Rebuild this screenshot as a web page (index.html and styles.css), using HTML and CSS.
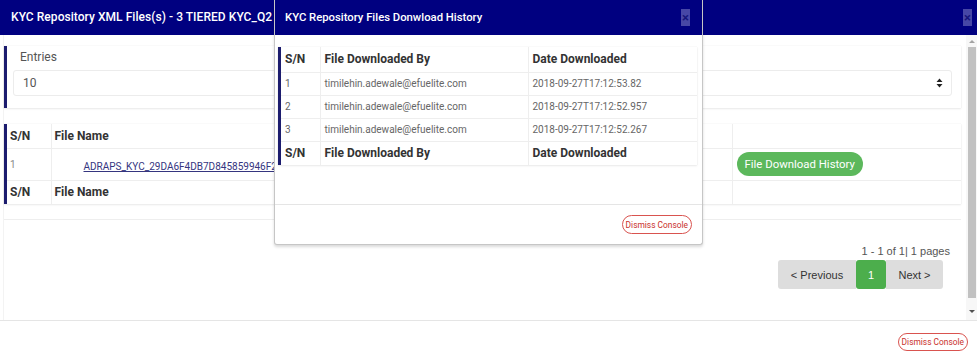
FILE: index.html
```html
<!DOCTYPE html>
<html lang="en">
<head>
    <meta charset="UTF-8">
    <meta name="viewport" content="width=device-width, initial-scale=1.0">
    <title>KYC Repository</title>
    <link rel="stylesheet" href="styles.css">
</head>
<body>
    <!-- back modal: repository files -->
    <div class="modal">
        <div class="modal-header">
            <h4 class="modal-title">KYC Repository XML Files(s) - 3 TIERED KYC_Q2</h4>
            <span class="close-btn">&times;</span>
        </div>

        <div class="modal-body">
            <div class="body-content">
                <!-- entries select -->
                <div class="card entries-card">
                    <label class="entries-label">Entries</label>
                    <div class="select-box">
                        <span>10</span>
                        <svg class="select-arrow" width="7" height="10" viewBox="0 0 7 10">
                            <path d="M0.5 4 L3.5 0.5 L6.5 4 Z M0.5 6 L3.5 9.5 L6.5 6 Z" fill="#222"/>
                        </svg>
                    </div>
                </div>

                <!-- files table -->
                <div class="card table-card">
                    <table class="files-table">
                        <thead>
                            <tr>
                                <th class="col-sn">S/N</th>
                                <th class="col-name">File Name</th>
                                <th class="col-action"></th>
                            </tr>
                        </thead>
                        <tbody>
                            <tr>
                                <td class="cell-sn">1</td>
                                <td class="cell-name"><a href="#" class="file-link">ADRAPS_KYC_29DA6F4DB7D845859946F2C7</a></td>
                                <td class="cell-action"><button class="history-btn">File Download History</button></td>
                            </tr>
                        </tbody>
                        <tfoot>
                            <tr>
                                <th>S/N</th>
                                <th>File Name</th>
                                <th></th>
                            </tr>
                        </tfoot>
                    </table>
                </div>

                <!-- paging -->
                <div class="pager">
                    <div class="pager-info">1 - 1 of 1| 1 pages</div>
                    <div class="pager-buttons">
                        <button class="page-btn">&lt; Previous</button>
                        <button class="page-btn page-current">1</button>
                        <button class="page-btn">Next &gt;</button>
                    </div>
                </div>
            </div>

            <!-- scrollbar -->
            <div class="scrollbar">
                <span class="scroll-arrow up"></span>
                <div class="scroll-thumb"></div>
                <span class="scroll-arrow down"></span>
            </div>
        </div>

        <div class="modal-footer">
            <button class="dismiss-btn">Dismiss Console</button>
        </div>
    </div>

    <!-- front modal: download history -->
    <div class="history-modal">
        <div class="modal-header history-header">
            <h4 class="modal-title history-title">KYC Repository Files Donwload History</h4>
            <span class="close-btn">&times;</span>
        </div>

        <div class="history-body">
            <div class="card history-card">
                <table class="history-table">
                    <thead>
                        <tr>
                            <th class="h-sn">S/N</th>
                            <th class="h-by">File Downloaded By</th>
                            <th class="h-date">Date Downloaded</th>
                        </tr>
                    </thead>
                    <tbody>
                        <tr>
                            <td>1</td>
                            <td>timilehin.adewale@efuelite.com</td>
                            <td>2018-09-27T17:12:53.82</td>
                        </tr>
                        <tr>
                            <td>2</td>
                            <td>timilehin.adewale@efuelite.com</td>
                            <td>2018-09-27T17:12:52.957</td>
                        </tr>
                        <tr>
                            <td>3</td>
                            <td>timilehin.adewale@efuelite.com</td>
                            <td>2018-09-27T17:12:52.267</td>
                        </tr>
                    </tbody>
                    <tfoot>
                        <tr>
                            <th>S/N</th>
                            <th>File Downloaded By</th>
                            <th>Date Downloaded</th>
                        </tr>
                    </tfoot>
                </table>
            </div>
        </div>

        <div class="history-footer">
            <button class="dismiss-btn">Dismiss Console</button>
        </div>
    </div>
</body>
</html>
```

FILE: styles.css
```css
/* reset */
* {
    margin: 0;
    padding: 0;
    box-sizing: border-box;
}

body {
    font-family: Roboto, "Liberation Sans", sans-serif;
    background-color: white;
    width: 977px;
    height: 351px;
    overflow: hidden;
    position: relative;
}

/* back modal */
.modal {
    display: flex;
    flex-direction: column;
    width: 977px;
    height: 351px;
}

.modal-header {
    display: flex;
    align-items: center;
    justify-content: space-between;
    height: 35px;
    background-color: #000080;
    padding: 0 5px 1px 11px;
    flex-shrink: 0;
}

.modal-title {
    color: white;
    font-size: 12px;
    font-weight: 500;
    letter-spacing: 0.05px;
}

.history-title {
    font-size: 11.3px;
    letter-spacing: 0;
}

.close-btn {
    display: flex;
    align-items: center;
    justify-content: center;
    width: 9px;
    height: 17px;
    background-color: #4747a6;
    color: #15157a;
    font-size: 13px;
    font-weight: 700;
    line-height: 1;
}

.modal-body {
    display: flex;
    height: 285px;
    flex-shrink: 0;
}

.body-content {
    flex: 1;
    margin-left: 3px;
    padding-right: 5px;
    border-left: 1px solid #f3f3f3;
}

/* cards with a dark left edge */
.card {
    background-color: white;
    border-left: 3px solid #1c1c6e;
    box-shadow: 0 1px 2px rgba(0,0,0,0.08), 0 0 1px rgba(0,0,0,0.1);
}

.entries-card {
    margin-top: 11px;
    height: 62px;
    padding: 3px 9px 0 6px;
}

.entries-label {
    display: block;
    padding-left: 7px;
    font-size: 12px;
    line-height: 16px;
    color: #555;
    margin-bottom: 5px;
}

.select-box {
    display: flex;
    align-items: center;
    justify-content: space-between;
    height: 26px;
    border: 1px solid #ececec;
    border-radius: 3px;
    padding: 0 8px 0 9px;
    font-size: 12px;
    color: #555;
}

.table-card {
    margin-top: 16px;
}

/* files table */
.files-table {
    width: 100%;
    border-collapse: collapse;
}

.files-table th,
.files-table td {
    border: 1px solid #eeeeee;
    text-align: left;
}

.files-table tr > :first-child {
    border-left: none;
}

.files-table tr > :last-child {
    border-right: none;
}

.files-table thead tr > * {
    border-top: none;
}

.files-table tfoot tr > * {
    border-bottom: none;
}

.files-table th {
    height: 24px;
    font-size: 12px;
    font-weight: 700;
    color: #333;
    padding: 0 3px;
}

.col-sn {
    width: 44px;
}

.col-action {
    width: 229px;
}

.files-table td {
    height: 32px;
}

.cell-sn {
    font-size: 10px;
    color: #888;
    padding-left: 3px;
}

.cell-name {
    padding-left: 32px;
    white-space: nowrap;
}

.file-link {
    font-size: 10px;
    color: #35357f;
    text-decoration: underline;
}

.cell-action {
    padding-left: 4px;
}

.history-btn {
    background-color: #5cb85c;
    color: white;
    border: none;
    border-radius: 12px;
    height: 24px;
    padding: 0 8px;
    font-family: Roboto, sans-serif;
    font-size: 11.4px;
    white-space: nowrap;
}

/* paging */
.pager {
    margin-top: 15px;
    border-top: 1px solid #eeeeee;
    padding-top: 23px;
    display: flex;
    flex-direction: column;
    align-items: flex-end;
    font-family: "Liberation Sans", Arial, sans-serif;
}

.pager-info {
    font-size: 11px;
    line-height: 16px;
    color: #555;
    margin-right: 11px;
    margin-bottom: 1px;
}

.pager-buttons {
    display: flex;
    margin-right: 18px;
}

.page-btn {
    height: 29px;
    border: none;
    background-color: #dddddd;
    color: #333;
    font-family: "Liberation Sans", Arial, sans-serif;
    font-size: 11px;
    padding: 0;
    white-space: nowrap;
}

.page-btn:first-child {
    width: 78px;
    border-radius: 3px 0 0 3px;
}

.page-btn:last-child {
    width: 57px;
    border-radius: 0 3px 3px 0;
}

.page-current {
    width: 30px;
    background-color: #4cae4c;
    color: white;
    border-radius: 3px;
}

/* fake scrollbar */
.scrollbar {
    width: 11px;
    display: flex;
    flex-direction: column;
    align-items: center;
    background-color: #f7f7f7;
    padding: 5px 0;
}

.scroll-thumb {
    width: 8px;
    height: 251px;
    margin: 4px 0 12px;
    background-color: #c1c1c1;
}

.scroll-arrow {
    width: 0;
    height: 0;
    border-left: 3px solid transparent;
    border-right: 3px solid transparent;
}

.scroll-arrow.up {
    border-bottom: 3px solid #a3a3a3;
}

.scroll-arrow.down {
    border-top: 3px solid #505050;
}

.modal-footer {
    flex: 1;
    border-top: 1px solid #e5e5e5;
    display: flex;
    justify-content: flex-end;
    align-items: flex-start;
    padding: 12px 9px 0 0;
}

.dismiss-btn {
    background-color: white;
    border: 1px solid #d9534f;
    border-radius: 10px;
    color: #c9302c;
    font-family: Roboto, sans-serif;
    font-size: 8.4px;
    height: 18px;
    padding: 0 3px;
}

/* front modal */
.history-modal {
    position: absolute;
    left: 274px;
    top: 0;
    width: 429px;
    height: 245px;
    background-color: white;
    border: 1px solid #c6c6c6;
    border-top: none;
    border-radius: 0 0 3px 3px;
    box-shadow: 0 2px 3px rgba(0,0,0,0.15);
    display: flex;
    flex-direction: column;
}

.history-header {
    padding: 0 12px 1px 10px;
}

.history-body {
    height: 169px;
    padding: 12px 5px 0 3px;
}

.history-table {
    width: 100%;
    border-collapse: collapse;
}

.history-table th,
.history-table td {
    border: 1px solid #eeeeee;
    text-align: left;
    padding: 0 4px;
}

.history-table tr > :first-child {
    border-left: none;
}

.history-table tr > :last-child {
    border-right: none;
}

.history-table thead tr > * {
    border-top: none;
}

.history-table tfoot tr > * {
    border-bottom: none;
}

.history-table th {
    height: 24px;
    font-size: 12px;
    font-weight: 700;
    color: #333;
}

.history-table thead th {
    height: 25px;
}

.h-sn {
    width: 39px;
}

.h-date {
    width: 169px;
}

.history-table td {
    height: 23px;
    font-size: 10px;
    color: #666;
}

.history-footer {
    flex: 1;
    border-top: 1px solid #e5e5e5;
    display: flex;
    justify-content: flex-end;
    align-items: flex-start;
    padding: 10px 10px 0 0;
}

.history-footer .dismiss-btn {
    height: 19px;
}
```
